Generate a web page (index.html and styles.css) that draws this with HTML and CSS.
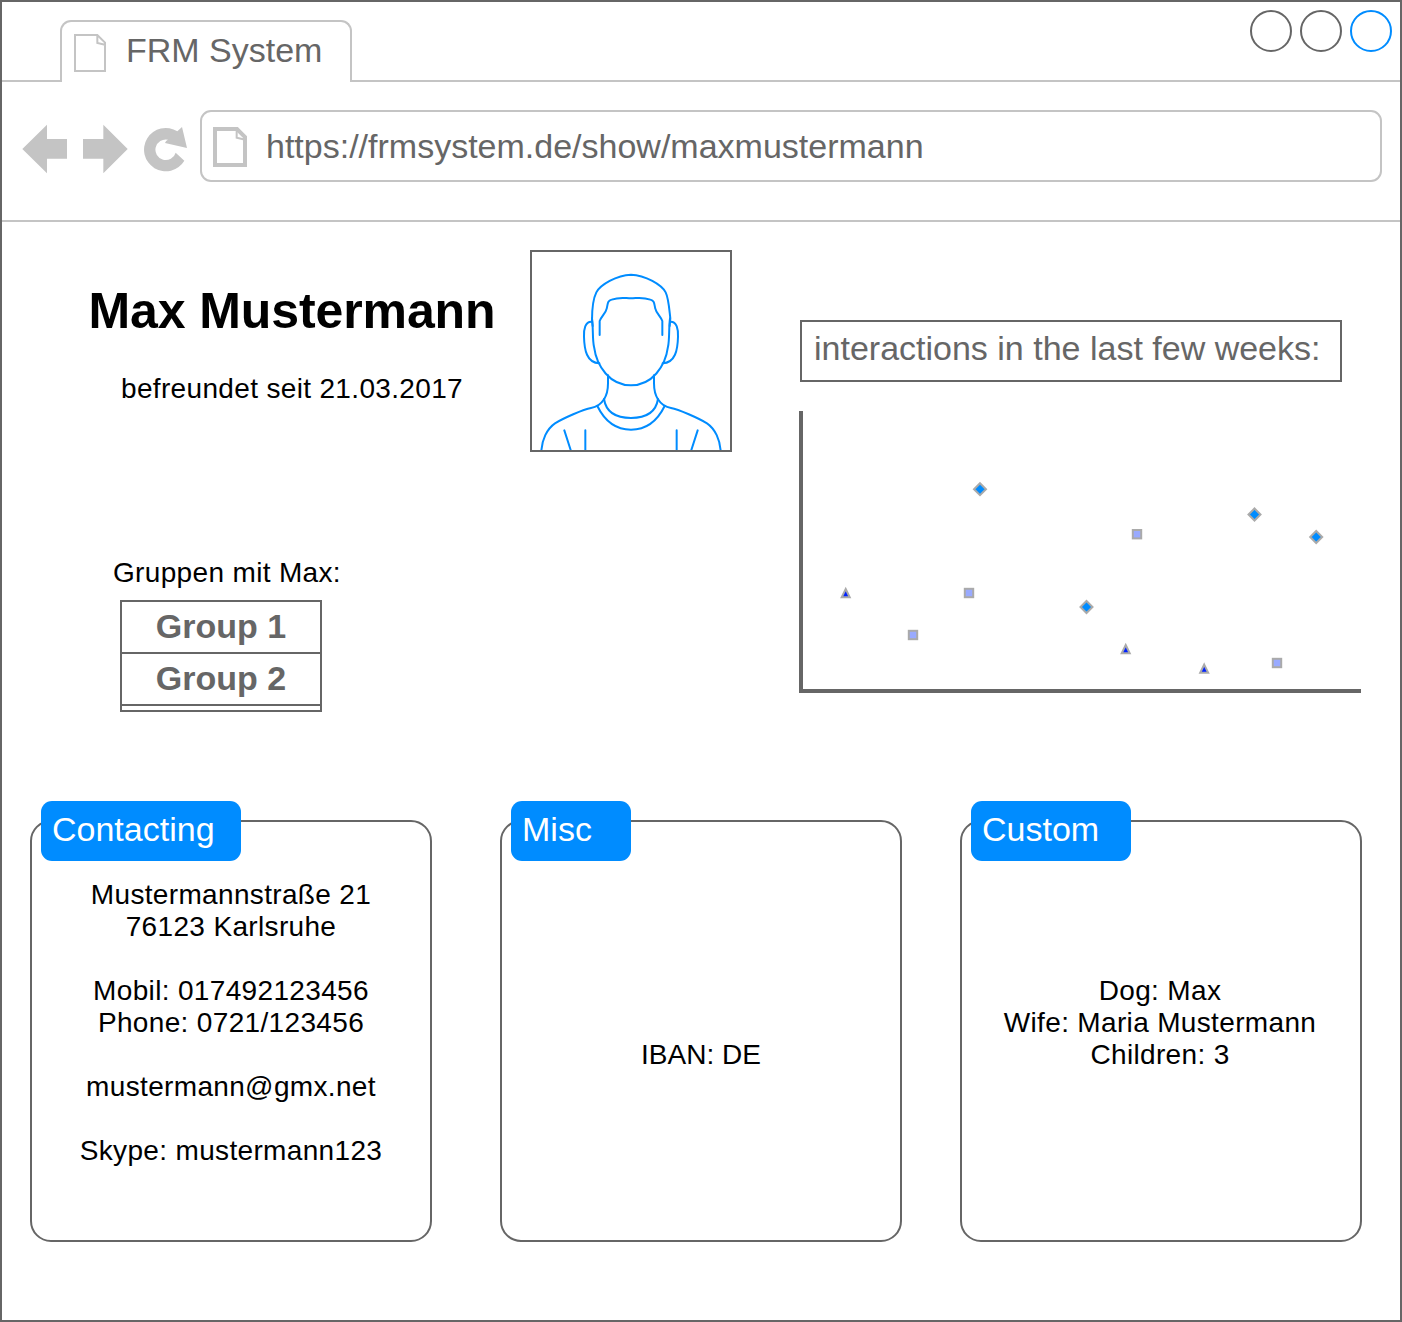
FILE: index.html
```html
<!DOCTYPE html>
<html lang="de">
<head>
<meta charset="utf-8">
<title>FRM System</title>
<link rel="stylesheet" href="styles.css">
</head>
<body>
<div class="window">
  <header class="tabbar">
    <div class="tab">
      <svg class="tab-icon" viewBox="222 102 96 114"><path d="M225 105H292L315 128V213H225ZM292 105V129L315 134"/></svg>
      <span>FRM System</span>
    </div>
    <div class="controls">
      <span class="circle"></span><span class="circle"></span><span class="circle active"></span>
    </div>
  </header>
  <nav class="toolbar">
    <div class="nav-buttons">
      <svg class="arrow" viewBox="66 372 138 150"><path d="M67 447 141 374V417H201V476H141V520Z"/></svg>
      <svg class="arrow" viewBox="246 372 138 150"><path d="M249 417H310V374L383 447 310 520V476H249Z"/></svg>
      <svg class="reload" viewBox="432 378 132 138"><path d="M553 482A65 65 0 1 1 532 394L546 381 561 444 495 429Q497 421 504 419A31 31 0 1 0 527 458Z"/></svg>
    </div>
    <div class="address">
      <svg class="page-icon" viewBox="639 381 102 120"><path class="thick" d="M645 387H711L735 411V495H645Z"/><path class="fold" d="M710 388V413L736 419"/></svg>
      <span>https://frmsystem.de/show/maxmustermann</span>
    </div>
  </nav>
  <main>
    <section class="overview">
      <div class="person">
        <h1>Max Mustermann</h1>
        <p class="since">befreundet seit 21.03.2017</p>
        <div class="groups">
          <p class="groups-label">Gruppen mit Max:</p>
          <ul class="group-list"><li>Group 1</li><li>Group 2</li></ul>
        </div>
      </div>
      <div class="avatar">
        <svg viewBox="36 36 594 594">
          <path d="M218 258L216 240C216 210 220 175 229 157C240 135 290 105 333 104C376 105 426 135 437 157C446 175 448 210 451 235L449 258"/>
          <path d="M216 235C220 265 217 300 222 320C230 380 270 436 333 436C396 436 436 380 444 320C449 300 446 265 450 235"/>
          <path d="M239 285V243C245 228 258 218 260 206C264 190 262 183 275 179C300 170 315 175 333 175C351 175 366 170 391 179C404 183 402 190 406 206C408 218 421 228 427 243V285"/>
          <path d="M216 245C195 243 191 270 192 290C193 330 200 368 238 370M450 245C471 243 475 270 474 290C473 330 466 368 428 370"/>
          <path d="M264 406V430C264 450 260 466 252 478C240 497 228 502 213 504C190 508 130 535 105 550C80 567 66 600 64 633M402 406V430C402 450 406 466 414 478C426 497 438 502 453 504C476 508 536 535 561 550C586 567 600 600 602 633"/>
          <path d="M252 477C258 515 285 534 333 534C381 534 408 515 414 477M232 498C255 545 290 569 333 569C376 569 411 545 434 498"/>
          <path d="M133 571L152 630M196 571V630M470 571V630M533 571L514 630"/>
        </svg>
      </div>
      <div class="interactions">
        <h2>interactions in the last few weeks:</h2>
        <svg class="chart" viewBox="799 411 562 282">
          <path class="axis" d="M801 411V691H1361"/>
          <g class="diamond">
            <path d="M980 483.2l6 6-6 6-6-6z"/>
            <path d="M1086.5 601l6 6-6 6-6-6z"/>
            <path d="M1254.5 508.5l6 6-6 6-6-6z"/>
            <path d="M1316.2 531l6 6-6 6-6-6z"/>
          </g>
          <g class="square">
            <rect x="964.8" y="588.8" width="8.4" height="8.4"/>
            <rect x="908.8" y="630.8" width="8.4" height="8.4"/>
            <rect x="1132.8" y="530" width="8.4" height="8.4"/>
            <rect x="1272.8" y="658.8" width="8.4" height="8.4"/>
          </g>
          <g class="triangle">
            <path d="M845.7 589l4 8.2h-8z"/>
            <path d="M1125.7 645l4 8.2h-8z"/>
            <path d="M1204.2 664.6l4 8.2h-8z"/>
          </g>
        </svg>
      </div>
    </section>
    <section class="cards">
      <article class="card contacting">
        <h3>Contacting</h3>
        <p>Mustermannstraße 21<br>76123 Karlsruhe</p>
        <p>Mobil: 017492123456<br>Phone: 0721/123456</p>
        <p>mustermann@gmx.net</p>
        <p>Skype: mustermann123</p>
      </article>
      <article class="card misc">
        <h3>Misc</h3>
        <p>IBAN: DE</p>
      </article>
      <article class="card custom">
        <h3>Custom</h3>
        <p>Dog: Max<br>Wife: Maria Mustermann<br>Children: 3</p>
      </article>
    </section>
  </main>
</div>
</body>
</html>
```
FILE: styles.css
```css
* { box-sizing: border-box; margin: 0; padding: 0; }
body {
  font: 28px/32px "Liberation Sans", Arial, sans-serif;
  letter-spacing: 0.34px;
  color: #000;
  background: #fff;
}
svg { display: block; flex: none; }
.window { width: 1402px; height: 1322px; border: 2px solid #666; }

.tabbar {
  display: flex;
  justify-content: space-between;
  height: 80px;
  padding: 8px 8px 0 58px;
  border-bottom: 2px solid #c4c4c4;
}
.tab {
  display: flex;
  gap: 20px;
  width: 292px;
  height: 62px;
  margin-top: 10px;
  padding: 12px 0 0 12px;
  border: 2px solid #c4c4c4;
  border-bottom: 0;
  border-radius: 11px 11px 0 0;
  background: #fff;
}
.tab span, .address span {
  font-size: 34px;
  line-height: 38px;
  letter-spacing: 0;
  color: #666;
  white-space: nowrap;
}
.tab span { margin-top: -3px; }
.tab-icon { width: 32px; height: 38px; fill: none; stroke: #c4c4c4; stroke-width: 6; }
.controls { display: flex; gap: 8px; }
.circle { width: 42px; height: 42px; border: 2px solid #666; border-radius: 50%; }
.circle.active { border-color: #008cff; }

.toolbar {
  display: flex;
  gap: 12px;
  height: 140px;
  padding: 28px 18px 0 20px;
  border-bottom: 2px solid #c4c4c4;
}
.nav-buttons { display: flex; align-items: center; height: 78px; fill: #c4c4c4; }
.arrow { width: 46px; height: 50px; margin-right: 14px; }
.arrow + .reload { margin-left: 2px; }
.reload { width: 44px; height: 46px; }
.address {
  display: flex;
  flex: 1;
  align-items: center;
  gap: 19px;
  height: 72px;
  padding-left: 11px;
  border: 2px solid #c4c4c4;
  border-radius: 11px;
}
.page-icon { width: 34px; height: 40px; margin-top: 2px; fill: none; stroke: #c4c4c4; }
.thick { stroke-width: 12; }
.fold { stroke-width: 6; }

.overview { display: flex; height: 598px; padding-top: 28px; }
.person { width: 528px; padding-left: 52px; text-align: center; }
h1 { margin-top: 32px; font-size: 50px; line-height: 58px; letter-spacing: -0.1px; }
.since { margin-top: 33px; }
.groups { margin: 152px 0 0 59px; text-align: left; }
.group-list {
  width: 202px;
  height: 112px;
  margin: 11px 0 0 7px;
  border: 2px solid #666;
  list-style: none;
}
.group-list li {
  height: 52px;
  border-bottom: 2px solid #666;
  font-size: 34px;
  font-weight: bold;
  line-height: 48px;
  letter-spacing: 0;
  text-align: center;
  color: #666;
}
.avatar { width: 202px; height: 202px; border: 2px solid #666; }
.avatar path { fill: none; stroke: #008cff; stroke-width: 6; stroke-linecap: round; }
.interactions { margin: 70px 0 0 67px; }
h2 {
  width: 542px;
  height: 62px;
  margin-left: 1px;
  padding: 7px 0 0 12px;
  border: 2px solid #666;
  font-size: 34px;
  font-weight: normal;
  line-height: 38px;
  letter-spacing: 0;
  white-space: nowrap;
  color: #666;
}
.chart { width: 562px; height: 282px; margin-top: 29px; }
.axis { fill: none; stroke: #666; stroke-width: 4; }
.diamond, .square, .triangle { stroke: #aaa; stroke-width: 2; }
.diamond { fill: #008cff; }
.square { fill: #9af; }
.triangle { fill: #0022ff; }

.cards { display: flex; padding-left: 28px; }
.card {
  width: 402px;
  height: 422px;
  border: 2px solid #666;
  border-radius: 21px;
  text-align: center;
}
.misc { margin: 0 58px 0 68px; }
h3 {
  width: 200px;
  height: 60px;
  margin: -21px 0 18px 9px;
  padding: 9px 0 0 11px;
  border-radius: 11px;
  background: #008cff;
  color: #fff;
  font-size: 34px;
  font-weight: normal;
  line-height: 38px;
  letter-spacing: 0;
  text-align: left;
}
.card p + p { margin-top: 32px; }
.misc h3 { width: 120px; margin-bottom: 178px; }
.misc p { letter-spacing: 0; }
.custom h3 { width: 160px; margin-bottom: 114px; }
.custom p { margin-right: 2px; }
```
